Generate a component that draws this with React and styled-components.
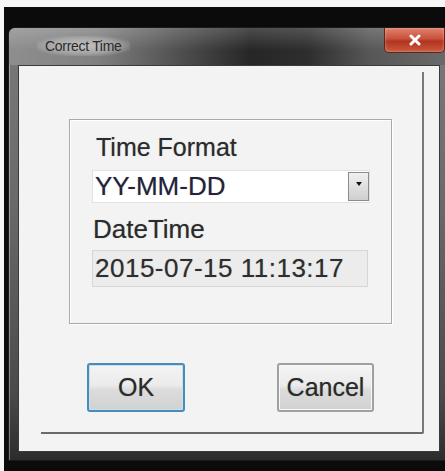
import React from 'react';
import styled, { createGlobalStyle } from 'styled-components';

const GlobalStyle = createGlobalStyle`
  html, body {
    margin: 0;
    padding: 0;
    background: #f4f4f4;
  }
  body {
    font-family: "Liberation Sans", Arial, sans-serif;
  }
`;

const Screen = styled.div`
  width: 445px;
  height: 471px;
  overflow: hidden;
  padding: 7px 0 0 4px;
  box-sizing: border-box;
  background: #f6f6f6;
`;

const Desktop = styled.div`
  height: 100%;
  background: #0b0b0b;
  padding: 20px 0 0 4px;
  box-sizing: border-box;
  overflow: hidden;
`;

const Window = styled.div`
  width: 440px;
  display: flex;
  flex-direction: column;
  border: 1px solid #1a1a1a;
  border-radius: 7px 7px 0 0;
  background: linear-gradient(to bottom, #7a7a7a 0%, #6a6a6a 40%, #4a4a4a 85%, #2c2c2c 100%);
  box-shadow: inset 1px 1px 0 rgba(255, 255, 255, 0.35);
`;

const TitleBar = styled.div`
  height: 37px;
  display: flex;
  align-items: flex-start;
  border-radius: 7px 7px 0 0;
  background:
    linear-gradient(to bottom, rgba(255, 255, 255, 0.18), rgba(255, 255, 255, 0) 60%),
    linear-gradient(to right, #8e8e8e 0%, #808080 20%, #4c4c4c 40%, #262626 55%, #2e2e2e 68%, #575757 82%, #6a6a6a 100%);
`;

const Title = styled.div`
  margin: 8px 0 0 28px;
  padding: 2px 8px;
  font-size: 14px;
  color: #2a2a2a;
  letter-spacing: -0.3px;
  background: radial-gradient(ellipse at center, rgba(215, 215, 215, 0.75) 0%, rgba(200, 200, 200, 0.45) 55%, rgba(200, 200, 200, 0) 80%);
`;

const CloseButton = styled.div`
  margin-left: auto;
  margin-right: 4px;
  width: 59px;
  height: 24px;
  display: flex;
  align-items: center;
  justify-content: center;
  border: 1px solid #5a2a22;
  border-top: none;
  border-radius: 0 0 5px 5px;
  background: linear-gradient(to bottom, #e0826e 0%, #c8513c 45%, #b3331f 55%, #c85a3e 100%);
  box-shadow: inset 0 0 3px rgba(255, 200, 180, 0.6);
`;

const Client = styled.div`
  margin: 0 9px 8px 9px;
  height: 387px;
  background: #f3f3f3;
  display: flex;
  flex-direction: column;
  box-sizing: border-box;
  padding: 6px 15px 17px 22px;
  border: 1px solid #3a3a3a;
`;

const Panel = styled.div`
  flex: 1;
  display: flex;
  flex-direction: column;
  border-right: 2px solid #7a7a7a;
  border-bottom: 2px solid #6a6a6a;
  border-radius: 0 0 2px 0;
  padding: 47px 0 0 28px;
`;

const GroupBox = styled.div`
  width: 323px;
  height: 205px;
  box-sizing: border-box;
  border: 1px solid #a9a9a9;
  box-shadow: inset 1px 1px 0 #fff, 1px 1px 0 #fff;
  padding: 13px 0 0 22px;
  display: flex;
  flex-direction: column;
`;

const Label = styled.div`
  font-size: ${p => p.size || 25}px;
  line-height: 28px;
  color: #2b2b2b;
  text-shadow: 0 0 1px rgba(0, 0, 0, 0.35);
  margin-left: ${p => p.indent || 0}px;
  margin-bottom: ${p => p.gap || 0}px;
`;

const Combo = styled.div`
  width: 278px;
  height: 33px;
  display: flex;
  background: #fff;
  border: 1px solid #e2e2e2;
  box-sizing: border-box;
  margin-bottom: 12px;
`;

const ComboText = styled.div`
  flex: 1;
  font-size: 26px;
  line-height: 31px;
  padding-left: 2px;
  color: #23233a;
  text-shadow: 0 0 1px rgba(0, 0, 40, 0.35);
`;

const ComboArrow = styled.div`
  width: 21px;
  margin: 1px 0;
  display: flex;
  align-items: center;
  justify-content: center;
  padding-bottom: 6px;
  box-sizing: border-box;
  border: 1px solid #8c8c8c;
  background: linear-gradient(to bottom, #f0f0f0, #cfcfcf);
  &::after {
    content: '';
    border-left: 3px solid transparent;
    border-right: 3px solid transparent;
    border-top: 4px solid #111;
  }
`;

const ValueField = styled.div`
  width: 276px;
  height: 37px;
  box-sizing: border-box;
  background: #ececec;
  border: 1px solid #d6d6d6;
  font-size: 26px;
  line-height: 35px;
  padding-left: 2px;
  color: #2e2e2e;
  letter-spacing: 0.5px;
  text-shadow: 0 0 1px rgba(0, 0, 0, 0.35);
`;

const ButtonRow = styled.div`
  width: 323px;
  box-sizing: border-box;
  padding: 0 18px;
  margin-top: 39px;
  display: flex;
  justify-content: space-between;
`;

const Button = styled.div`
  width: ${p => p.w}px;
  height: 49px;
  box-sizing: border-box;
  display: flex;
  align-items: center;
  justify-content: center;
  font-size: 25px;
  color: #2a2a2a;
  text-shadow: 0 0 1px rgba(0, 0, 0, 0.35);
  border-radius: 3px;
  border: 2px solid ${p => (p.primary ? '#4a8bb8' : '#a0a0a0')};
  background: linear-gradient(to bottom, #f4f4f4 0%, #ebebeb 45%, #dcdcdc 55%, #d2d2d2 100%);
  box-shadow: ${p => (p.primary ? 'inset 0 0 0 1px #bfe3f3' : 'inset 0 0 0 1px #f8f8f8')};
`;

export default function App() {
  return (
    <>
      <GlobalStyle />
      <Screen>
        <Desktop>
          <Window>
            <TitleBar>
              <Title>Correct Time</Title>
              <CloseButton>
                <svg width="12" height="12" viewBox="0 0 12 12">
                  <path d="M2 2 L10 10 M10 2 L2 10" stroke="#fff" strokeWidth="3" strokeLinecap="round" />
                </svg>
              </CloseButton>
            </TitleBar>
            <Client>
              <Panel>
                <GroupBox>
                  <Label indent={4} gap={9}>Time Format</Label>
                  <Combo>
                    <ComboText>YY-MM-DD</ComboText>
                    <ComboArrow />
                  </Combo>
                  <Label size={26} indent={1} gap={7}>DateTime</Label>
                  <ValueField>2015-07-15 11:13:17</ValueField>
                </GroupBox>
                <ButtonRow>
                  <Button primary w={98}>OK</Button>
                  <Button w={97}>Cancel</Button>
                </ButtonRow>
              </Panel>
            </Client>
          </Window>
        </Desktop>
      </Screen>
    </>
  );
}
